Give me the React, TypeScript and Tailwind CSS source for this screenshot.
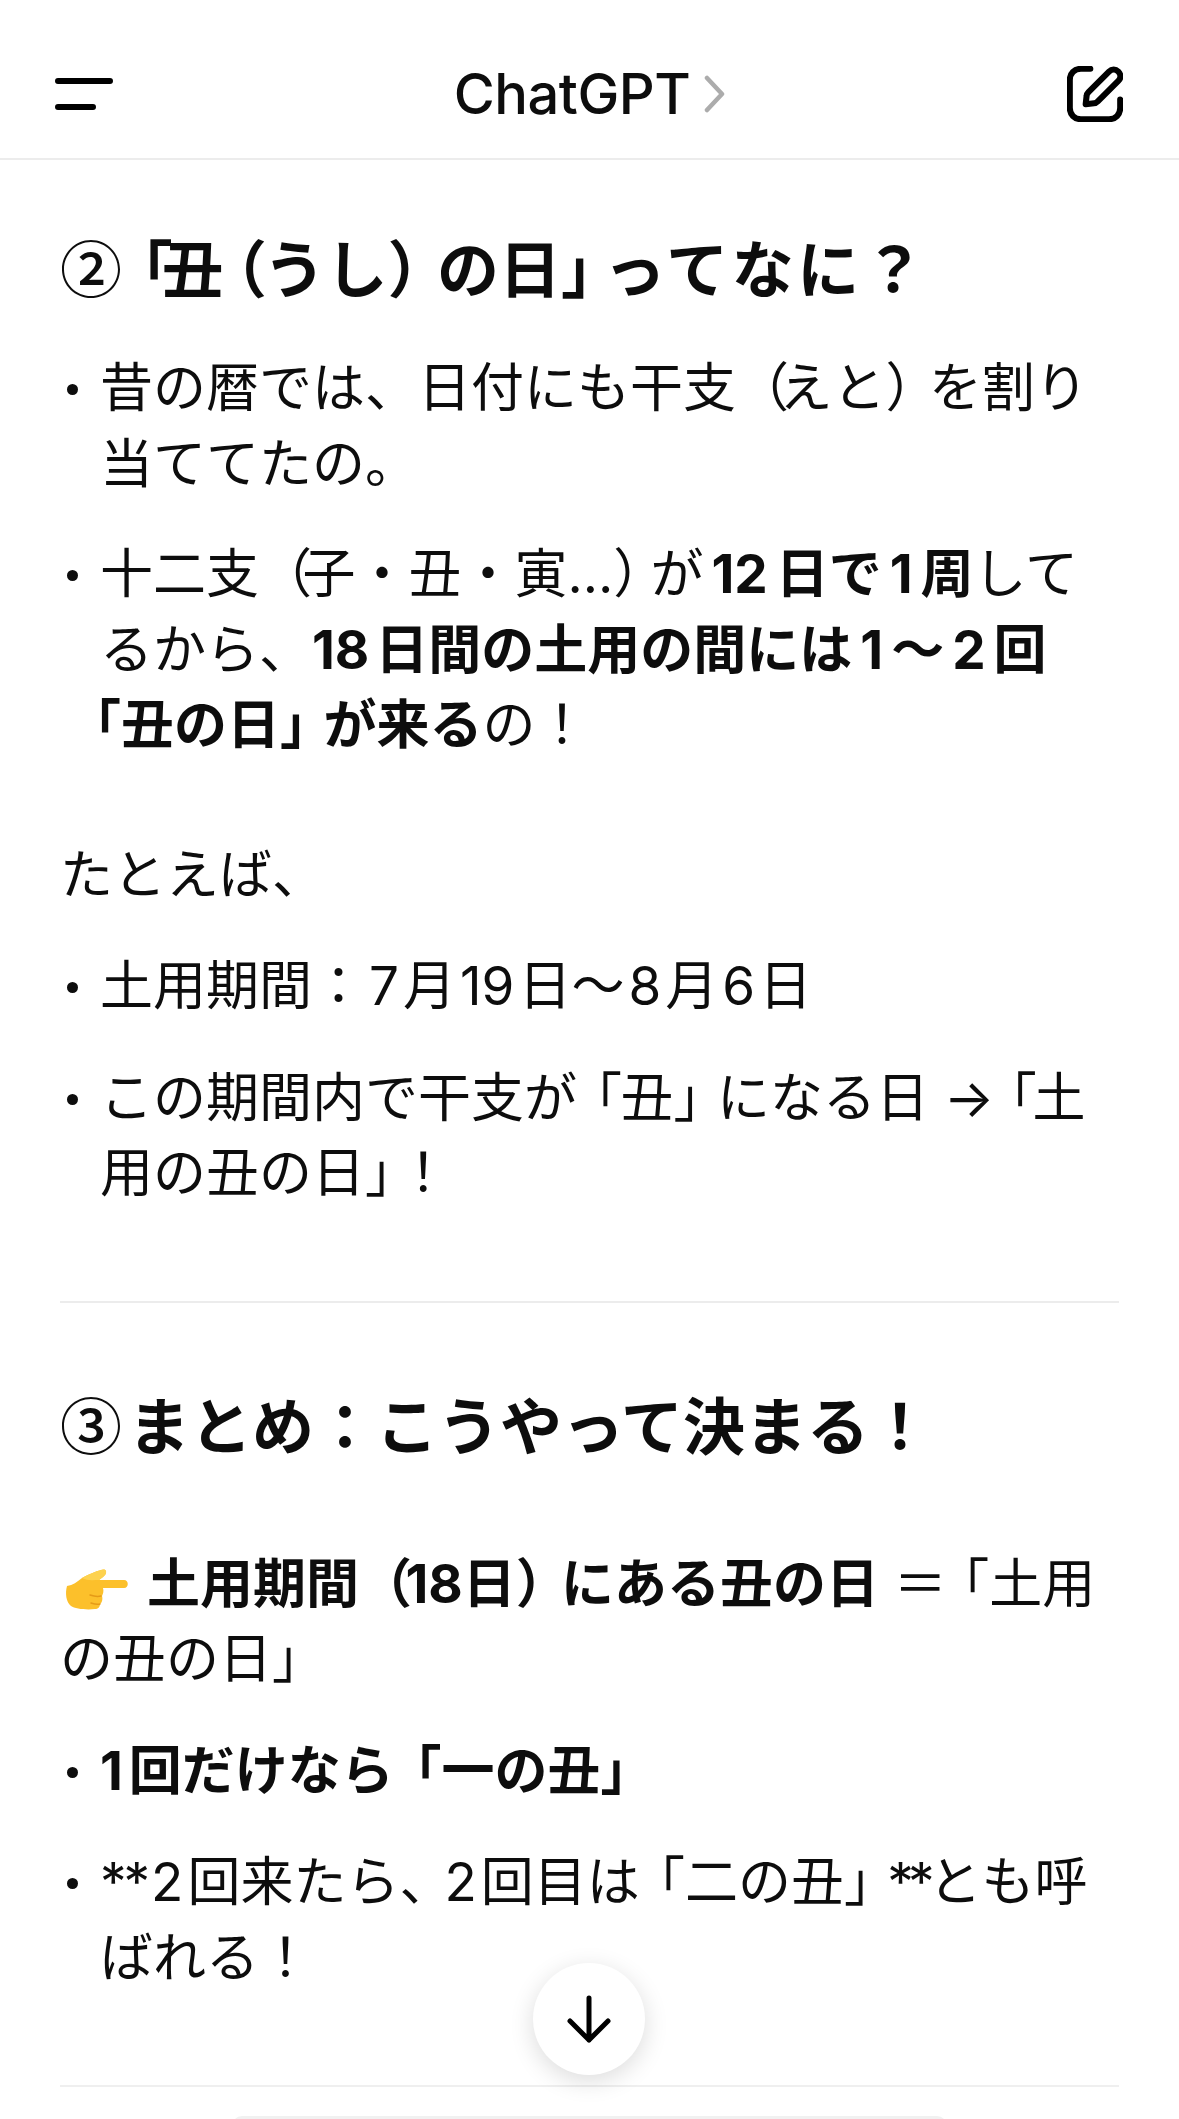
const cjk = "font-['Inter','Noto_Sans_CJK_JP',sans-serif]";

function Bullet({ children }: { children: React.ReactNode }) {
  return (
    <div className="flex">
      <span className="mt-[33px] ml-[7px] mr-[22px] h-[11px] w-[11px] shrink-0 rounded-full bg-[#0d0d0d]" />
      <div className="whitespace-nowrap">{children}</div>
    </div>
  );
}

// digits get a little air next to kana, like the phone's text layout
function N({ children }: { children: React.ReactNode }) {
  return <span className="px-[4px]">{children}</span>;
}

function BoldN({ children }: { children: React.ReactNode }) {
  return <span className="px-[8px]">{children}</span>;
}

// full-width punctuation set tighter than the font's own box
function T({ children }: { children: React.ReactNode }) {
  return <span className="tracking-[-0.18em]">{children}</span>;
}

function PointingHand() {
  return (
    <svg width="64" height="42" viewBox="0 0 64 42" className="mb-[-3px] ml-[5px] mr-[18px] inline-block">
      <path
        d="M2 17C8 16 12 13 17 9 24 5 34 1 39 .5c3 .5 3 4.500-1 7.500l-4 3h25c5 0 5 8 0 8H38c1 3 0 6-1 8 1 3 0 7-2 8 0 3-2 5-5 5-8 1-20 0-24-3C1 33 0 24 2 17z"
        fill="#fcc02b"
      />
      <path d="M17 9C24 5 34 1 39 .5c3 .5 3 4.500-1 7.500l-4 3c-6 0-12 1-17-2z" fill="#fdd24f" />
      <path d="M36 27c-4 1-8 0-11-1M35 35c-3 1-6 0-9-1" fill="none" stroke="#e59a17" strokeWidth="1.5" strokeLinecap="round" />
    </svg>
  );
}

export default function App() {
  return (
    <div className={`relative h-[2119px] overflow-hidden bg-white text-[#0d0d0d] ${cjk}`}>
      {/* Header */}
      <header className="flex h-[160px] items-center justify-between border-b-2 border-[#ececec] pl-[55px] pr-[56px] pt-[30px]">
        <svg width="58" height="34" viewBox="0 0 58 34">
          <path d="M3 4h52M3 30h35" stroke="#000" strokeWidth="6" strokeLinecap="round" />
        </svg>
        <div className="flex items-center gap-[14px]">
          <span className="text-[56px] font-medium leading-none tracking-[-0.5px]">ChatGPT</span>
          <svg width="22" height="38" viewBox="0 0 22 38">
            <path d="M3 3l15 16L3 35" fill="none" stroke="#acacac" strokeWidth="4.5" strokeLinecap="round" strokeLinejoin="round" />
          </svg>
        </div>
        <svg width="56" height="56" viewBox="0 0 60 60">
          <path d="M25 3H15C8 3 3 8 3 15v30c0 7 5 12 12 12h30c7 0 12-5 12-12V36" fill="none" stroke="#000" strokeWidth="6.5" strokeLinecap="round" />
          <path d="M20 41l1-9c0-2 1-3 2-4L45 6c3-3 7-3 10 0s3 7 0 10L33 38c-1 1-2 2-4 2z" fill="none" stroke="#000" strokeWidth="6.5" strokeLinejoin="round" />
        </svg>
      </header>

      {/* Message body */}
      <main className="px-[60px] pt-[66px] text-[53px] leading-[75.5px]">
        <h2 className="whitespace-nowrap text-[62px] font-bold leading-[80px]">
          <span className="font-['Noto_Sans_CJK_JP'] font-medium tracking-[-0.18em]">②</span>
          <T>「</T>
          <span className="tracking-[-0.3em]">丑</span>
          <span className="tracking-[-0.06em]">（</span>うし
          <span className="tracking-[-0.2em]">）</span>の日
          <span className="tracking-[-0.31em]">」</span>
          <span className="tracking-[3.5px]">ってなに</span>？
        </h2>

        <div className="mt-[40px]">
          <Bullet>
            昔の暦では、日付にも干支<T>（</T>えと<T>）</T>を割り
            <br />
            当ててたの。
          </Bullet>
        </div>
        <div className="mt-[35px]">
          <Bullet>
            十二支<T>（</T>子・丑・寅…<span className="tracking-[-0.3em]">）</span>が
            <b>
              <BoldN>12</BoldN>日で<BoldN>1</BoldN>周
            </b>
            して
            <br />
            るから、
            <b>
              <span className="pr-[6px]">18</span>日間の土用の間には<BoldN>1</BoldN>〜<BoldN>2</BoldN>回
            </b>
            <br />
            <b className="ml-[-32px]">
              「丑の日<T>」</T>が来る
            </b>
            の！
          </Bullet>
        </div>

        <p className="mt-[74px]">たとえば、</p>

        <div className="mt-[36px]">
          <Bullet>
            土用期間：<N>7</N>月<N>19</N>日〜<N>8</N>月<N>6</N>日
          </Bullet>
        </div>
        <div className="mt-[36px]">
          <Bullet>
            この期間内で干支<span className="tracking-[-0.15em]">が</span>
            <span className="tracking-[-0.03em]">「</span>丑<T>」</T>になる日 <span className="tracking-[-0.2em]">→</span>
            <span className="tracking-[-0.08em]">「</span>土
            <br />
            用の丑の日<span className="tracking-[-0.4em]">」</span>！
          </Bullet>
        </div>

        <hr className="mt-[89px] border-t-2 border-[#ececec]" />

        <h2 className="mt-[80px] whitespace-nowrap text-[62px] font-bold leading-[80px]">
          <span className="mr-[6px] font-['Noto_Sans_CJK_JP'] font-medium">③</span>まとめ：こうやって決まる！
        </h2>

        <p className="mt-[79px] whitespace-nowrap">
          <PointingHand />
          <b>
            土用期間<T>（</T>
            <span className="pl-[3px]">18</span>日<span className="tracking-[-0.15em]">）</span>にある丑の日
          </b>{" "}
          <span className="tracking-[-0.2em]">＝</span>「土用
          <br />
          の丑の日」
        </p>

        <div className="mt-[36px]">
          <Bullet>
            <b>
              <span className="pr-[6px]">1</span>回だけな<span className="tracking-[-0.1em]">ら</span>「一の丑<T>」</T>
            </b>
          </Bullet>
        </div>
        <div className="mt-[36px]">
          <Bullet>
            <span className="tracking-[-3px]">**</span>
            <N>2</N>回来たら<span className="tracking-[-0.15em]">、</span>
            <span className="pr-[4px]">2</span>回目<span className="tracking-[-0.15em]">は</span>「二の丑<T>」</T>
            <span className="tracking-[-6px]">**</span>とも呼
            <br />
            ばれる！
          </Bullet>
        </div>

        <hr className="mt-[89px] border-t-2 border-[#efefef]" />
      </main>

      {/* Scroll to bottom */}
      <button className="absolute left-[533px] top-[1963px] flex h-[112px] w-[112px] items-center justify-center rounded-full bg-white shadow-[0_6px_24px_rgba(0,0,0,0.14)]">
        <svg width="44" height="48" viewBox="0 0 44 48">
          <path d="M22 3v42M3 26l19 19 19-19" fill="none" stroke="#000" strokeWidth="5" strokeLinecap="round" strokeLinejoin="round" />
        </svg>
      </button>

      {/* Top edge of the composer */}
      <div className="absolute left-[232px] top-[2116px] h-[10px] w-[715px] rounded-t-full bg-[#f1f1f1]" />
    </div>
  );
}
